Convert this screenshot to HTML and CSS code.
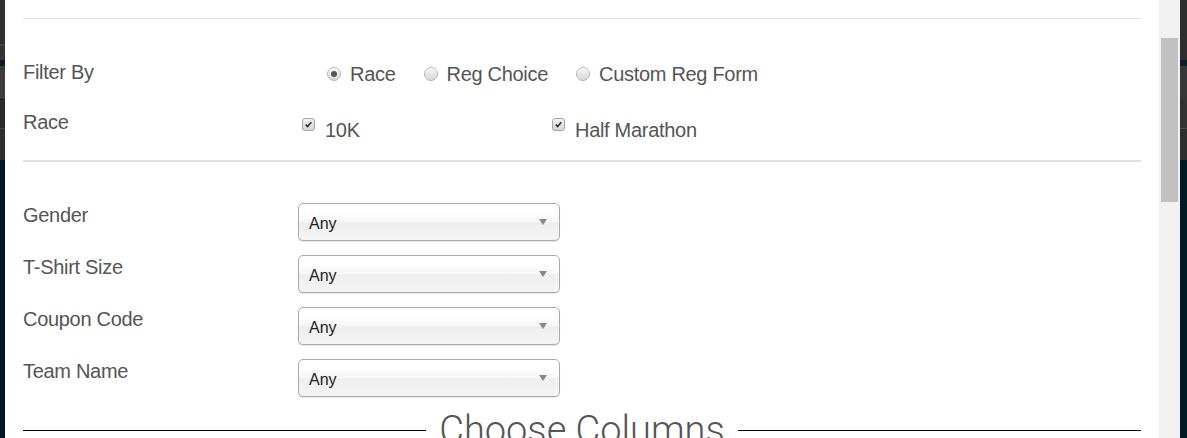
FILE: index.html
```html
<!DOCTYPE html>
<html lang="en">
<head>
  <meta charset="UTF-8" />
  <title>Download Registrations</title>
  <meta name="viewport" content="width=device-width, initial-scale=1" />
  <link rel="stylesheet" href="styles.css">
</head>
<body>
  <div class="edge edge-left"></div>

  <div class="modal">
    <div class="modal-body">
      <hr class="rule">

      <div class="form-row filter-row">
        <label class="row-label">Filter By</label>
        <div class="radio-group">
          <label class="choice"><span class="radio checked"></span>Race</label>
          <label class="choice"><span class="radio"></span>Reg Choice</label>
          <label class="choice"><span class="radio"></span>Custom Reg Form</label>
        </div>
      </div>

      <div class="form-row race-row">
        <label class="row-label">Race</label>
        <div class="check-group">
          <label class="choice check-item">
            <span class="checkbox">
              <svg viewBox="0 0 13 13" aria-hidden="true"><path d="M3.2 6.6 L5.4 8.8 L9.8 3.8"></path></svg>
            </span>10K
          </label>
          <label class="choice check-item">
            <span class="checkbox">
              <svg viewBox="0 0 13 13" aria-hidden="true"><path d="M3.2 6.6 L5.4 8.8 L9.8 3.8"></path></svg>
            </span>Half Marathon
          </label>
        </div>
      </div>

      <hr class="rule rule-thick">

      <!-- registration field filters -->
      <div class="select-row first">
        <label class="select-label">Gender</label>
        <div class="fake-select"><span>Any</span><span class="caret"></span></div>
      </div>
      <div class="select-row">
        <label class="select-label">T-Shirt Size</label>
        <div class="fake-select"><span>Any</span><span class="caret"></span></div>
      </div>
      <div class="select-row">
        <label class="select-label">Coupon Code</label>
        <div class="fake-select"><span>Any</span><span class="caret"></span></div>
      </div>
      <div class="select-row">
        <label class="select-label">Team Name</label>
        <div class="fake-select"><span>Any</span><span class="caret"></span></div>
      </div>

      <div class="section-title"><span>Choose Columns</span></div>
    </div>

    <div class="scrollbar"><div class="thumb"></div></div>
  </div>

  <div class="edge edge-right"></div>
</body>
</html>
```

FILE: styles.css
```css
* { box-sizing: border-box; }
body {
  margin: 0;
  height: 438px;
  overflow: hidden;
  display: flex;
  background: #011923;
  font-family: "Liberation Sans", Arial, sans-serif;
  color: #555;
}

/* dimmed page behind the modal */
.edge {
  flex: none;
  height: 100%;
}
.edge-left {
  width: 5px;
  background: linear-gradient(to bottom,
    #2f2f2f 0 44px, #414141 44px 46px, #333 46px 60px,
    #0a1e28 60px 66px, #3b3b3b 66px 97px, #4a4a4a 97px 98px,
    #2a2a2a 98px 128px, #474747 128px 129px, #2e2e2e 129px 160px,
    #011923 160px);
}
.edge-right {
  flex: 1;
  background: linear-gradient(to bottom,
    #2d2d2d 0 60px, #0a1e28 60px 66px, #363636 66px 98px,
    #333 98px 128px, #474747 128px 129px, #2e2e2e 129px 160px,
    #011923 160px);
}

.modal {
  flex: none;
  width: 1175px;
  display: flex;
  background: #fff;
}
.modal-body {
  width: 1154px;
  padding: 0 18px;
}

.scrollbar {
  width: 21px;
  background: #f1f1f1;
  padding: 38px 0 0 2px;
}
.thumb {
  width: 17px;
  height: 164px;
  background: #c1c1c1;
}

.rule {
  margin: 18px 0 0;
  border: 0;
  border-top: 1px solid #e0e0e0;
}
.rule-thick {
  margin-top: 16px;
  border-top-width: 2px;
}

.form-row {
  display: flex;
  align-items: flex-start;
  font-size: 20px;
  letter-spacing: -0.3px;
  line-height: 28px;
}
.filter-row { margin-top: 39px; }
.race-row { margin-top: 20px; }
.row-label {
  width: 279px;
  flex: none;
}

.choice {
  display: flex;
  align-items: center;
}

.radio-group {
  display: flex;
  gap: 28px;
  padding: 2px 0 0 25px;
}
.radio {
  width: 14px;
  height: 14px;
  margin-right: 9px;
  border-radius: 50%;
  border: 1px solid #b4b4b4;
  background: linear-gradient(#f4f4f4, #d8d8d8);
  box-shadow: inset 0 1px 1px #fff;
  display: flex;
  align-items: center;
  justify-content: center;
}
.radio.checked::after {
  content: "";
  width: 6px;
  height: 6px;
  border-radius: 50%;
  background: #555;
}

.check-group {
  display: flex;
  padding-top: 8px;
}
.check-item {
  width: 250px;
  align-items: flex-start;
}
.checkbox {
  width: 13px;
  height: 13px;
  margin: 2px 10px 0 0;
  border-radius: 3px;
  border: 1px solid #a5a5a5;
  background: linear-gradient(#f2f2f2, #d6d6d6);
  display: flex;
}
.checkbox svg {
  width: 11px;
  height: 11px;
  fill: none;
  stroke: #333;
  stroke-width: 2;
}

.select-row {
  display: flex;
  align-items: flex-start;
  margin-top: 14px;
}
.select-row.first { margin-top: 41px; }
.select-label {
  width: 275px;
  flex: none;
  font-size: 20px;
  letter-spacing: -0.3px;
  line-height: 24px;
}
.fake-select {
  width: 262px;
  height: 38px;
  display: flex;
  align-items: center;
  justify-content: space-between;
  padding: 3px 12px 0 10px;
  border: 1px solid #aaa;
  border-radius: 5px;
  background: linear-gradient(#fff 20%, #f6f6f6 50%, #eee 52%, #f4f4f4 100%);
  box-shadow: 0 1px 1px rgba(0,0,0,0.1);
  font-size: 16px;
  color: #222;
}
.caret {
  width: 0;
  height: 0;
  margin-top: -4px;
  border-style: solid;
  border-width: 6px 4.5px 0;
  border-color: #888 transparent transparent;
}

.section-title {
  display: flex;
  align-items: center;
  gap: 13px;
  margin-top: 14px;
  font-family: Roboto, "Liberation Sans", sans-serif;
  font-weight: 300;
  font-size: 38px;
  line-height: 38px;
  color: #555;
}
.section-title::before,
.section-title::after {
  content: "";
  flex: 1;
  border-top: 1px solid #000;
}
```
